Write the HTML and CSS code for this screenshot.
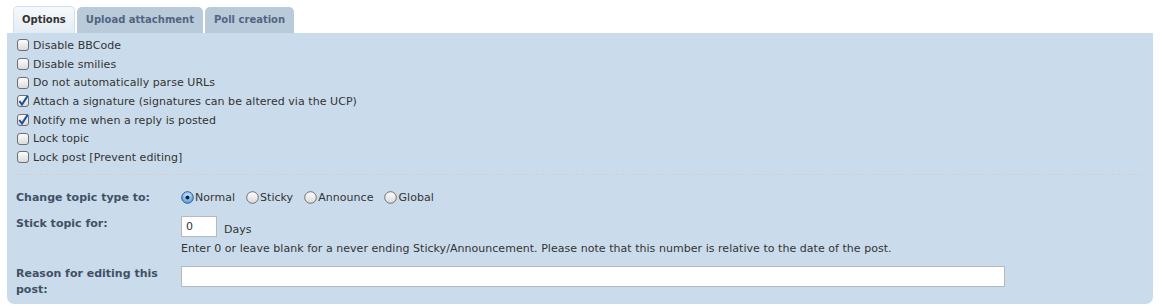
FILE: index.html
```html
<!DOCTYPE html>
<html>
<head>
<meta charset="utf-8">
<link rel="stylesheet" href="styles.css">
</head>
<body>
<div class="wrap">
  <ul class="tabs">
    <li class="tab active">Options</li>
    <li class="tab">Upload attachment</li>
    <li class="tab">Poll creation</li>
  </ul>
  <div class="panel">
    <div class="checks">
      <label class="check"><svg class="box" width="12" height="12" viewBox="0 0 12 12"><defs><linearGradient id="g1" x1="0" y1="0" x2="0" y2="1"><stop offset="0" stop-color="#ffffff"/><stop offset="1" stop-color="#d9d9d9"/></linearGradient></defs><rect x="0.5" y="0.5" width="11" height="11" rx="2.5" fill="url(#g1)" stroke="#6e6e6e"/></svg>Disable BBCode</label>
      <label class="check"><svg class="box" width="12" height="12" viewBox="0 0 12 12"><rect x="0.5" y="0.5" width="11" height="11" rx="2.5" fill="url(#g1)" stroke="#6e6e6e"/></svg>Disable smilies</label>
      <label class="check"><svg class="box" width="12" height="12" viewBox="0 0 12 12"><rect x="0.5" y="0.5" width="11" height="11" rx="2.5" fill="url(#g1)" stroke="#6e6e6e"/></svg>Do not automatically parse URLs</label>
      <label class="check"><svg class="box" width="12" height="12" viewBox="0 0 12 12"><rect x="0.5" y="0.5" width="11" height="11" rx="2.5" fill="url(#g1)" stroke="#6e6e6e"/><path d="M2.3 6 L5 9.6 L10.8 0.6" fill="none" stroke="#1d4f9c" stroke-width="2"/></svg>Attach a signature (signatures can be altered via the UCP)</label>
      <label class="check"><svg class="box" width="12" height="12" viewBox="0 0 12 12"><rect x="0.5" y="0.5" width="11" height="11" rx="2.5" fill="url(#g1)" stroke="#6e6e6e"/><path d="M2.3 6 L5 9.6 L10.8 0.6" fill="none" stroke="#1d4f9c" stroke-width="2"/></svg>Notify me when a reply is posted</label>
      <label class="check"><svg class="box" width="12" height="12" viewBox="0 0 12 12"><rect x="0.5" y="0.5" width="11" height="11" rx="2.5" fill="url(#g1)" stroke="#6e6e6e"/></svg>Lock topic</label>
      <label class="check"><svg class="box" width="12" height="12" viewBox="0 0 12 12"><rect x="0.5" y="0.5" width="11" height="11" rx="2.5" fill="url(#g1)" stroke="#6e6e6e"/></svg>Lock post [Prevent editing]</label>
    </div>
    <hr class="dashed">
    <dl class="row row-type">
      <dt>Change topic type to:</dt>
      <dd class="radios">
        <label class="radio"><svg width="13" height="13" viewBox="0 0 13 13"><defs><radialGradient id="rg" cx="0.5" cy="0.35" r="0.6"><stop offset="0" stop-color="#d8ecff"/><stop offset="1" stop-color="#5b9de0"/></radialGradient></defs><circle cx="6.5" cy="6.5" r="5.8" fill="url(#rg)" stroke="#2d5d9c"/><circle cx="6.5" cy="6.5" r="2" fill="#10223a"/></svg>Normal</label>
        <label class="radio"><svg width="13" height="13" viewBox="0 0 13 13"><circle cx="6.5" cy="6.5" r="5.8" fill="url(#g1)" stroke="#707070"/></svg>Sticky</label>
        <label class="radio"><svg width="13" height="13" viewBox="0 0 13 13"><circle cx="6.5" cy="6.5" r="5.8" fill="url(#g1)" stroke="#707070"/></svg>Announce</label>
        <label class="radio"><svg width="13" height="13" viewBox="0 0 13 13"><circle cx="6.5" cy="6.5" r="5.8" fill="url(#g1)" stroke="#707070"/></svg>Global</label>
      </dd>
    </dl>
    <dl class="row row-stick">
      <dt>Stick topic for:</dt>
      <dd>
        <div class="days"><input class="inputbox short" type="text" value="0"><span class="unit">Days</span></div>
        <div class="explain">Enter 0 or leave blank for a never ending Sticky/Announcement. Please note that this number is relative to the date of the post.</div>
      </dd>
    </dl>
    <dl class="row row-reason">
      <dt>Reason for editing this post:</dt>
      <dd><input class="inputbox long" type="text" value=""></dd>
    </dl>
  </div>
</div>
</body>
</html>
```

FILE: styles.css
```css
html, body {
  margin: 0;
  padding: 0;
  background: #ffffff;
}
body {
  font-family: "DejaVu Sans", Verdana, sans-serif;
  color: #333333;
}
.wrap {
  padding: 6px 8px 0 7px;
}
.tabs {
  list-style: none;
  margin: 0;
  padding: 0 0 0 6px;
  display: flex;
  align-items: flex-end;
  gap: 2px;
  height: 27px;
}
.tab {
  height: 26px;
  box-sizing: border-box;
  padding: 0 9px 1px 9px;
  display: flex;
  align-items: center;
  font-size: 10px;
  font-weight: bold;
  color: #536482;
  background: #b9cbdb;
  border-radius: 5px 5px 0 0;
}
.tab.active {
  height: 27px;
  padding: 0 8px 1px 8px;
  color: #333333;
  background: linear-gradient(#f6f9fb, #e3ecf3);
  border: 1px solid #d3e0ea;
  border-bottom: none;
}
.panel {
  background: #cadceb;
  border-radius: 0 0 7px 7px;
  padding: 3px 0 6px 0;
  width: 1146px;
}
.checks {
  padding-left: 10px;
  letter-spacing: 0.05px;
}
.check {
  display: flex;
  align-items: center;
  height: 18.7px;
  font-size: 11px;
}
.box {
  margin-right: 4px;
  flex: none;
}
.dashed {
  border: none;
  border-top: 1px dashed #d4cfcf;
  margin: 7px 13px 13px 8px;
  height: 0;
}
.row {
  display: flex;
  margin: 0;
  padding-left: 9px;
}
.row dt {
  width: 165px;
  flex: none;
  font-size: 11px;
  font-weight: bold;
  color: #425067;
  line-height: 16px;
}
.row dd {
  margin: 0;
  font-size: 11px;
  letter-spacing: 0.04px;
}
.row-type {
  height: 20px;
  align-items: center;
}
.radios {
  display: flex;
  gap: 11px;
}
.radio {
  display: flex;
  align-items: center;
  gap: 1px;
}
.row-stick {
  margin-top: 8px;
}
.days {
  display: flex;
  align-items: flex-end;
}
.inputbox {
  box-sizing: border-box;
  height: 21px;
  border: 1px solid #b4bac0;
  background: #ffffff;
  font-family: "DejaVu Sans", Verdana, sans-serif;
  font-size: 11px;
  color: #333333;
  padding: 0 4px;
  margin: 0;
  outline: none;
}
.short {
  width: 36px;
}
.long {
  width: 824px;
}
.unit {
  margin-left: 7px;
  line-height: 14px;
}
.explain {
  margin-top: 4px;
  line-height: 16px;
}
.row-reason {
  margin-top: 9px;
}
```
